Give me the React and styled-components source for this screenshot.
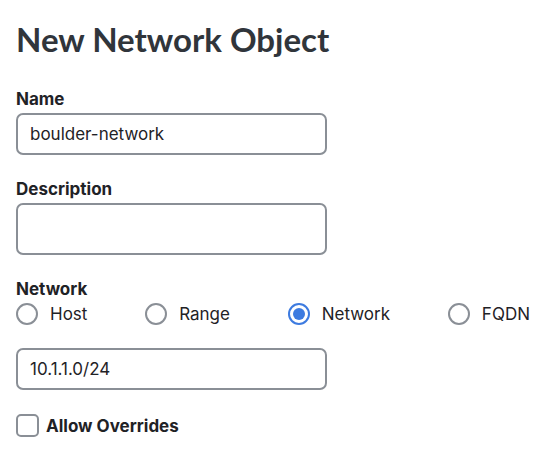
import React, { useState } from 'react';
import styled, { createGlobalStyle } from 'styled-components';

const GlobalStyle = createGlobalStyle`
  body {
    margin: 0;
    background: #ffffff;
    font-family: Inter, "Noto Sans", sans-serif;
    color: #1f2226;
  }
`;

const Page = styled.div`
  width: 548px;
  padding: 20px 18px 0 16px;
  box-sizing: border-box;
`;

const Title = styled.h1`
  margin: 0 0 31px;
  font-family: Lato, "Noto Sans", sans-serif;
  font-weight: 700;
  font-size: 33px;
  line-height: 38px;
  color: #30353b;
`;

const Field = styled.div`
  display: flex;
  flex-direction: column;
  margin-bottom: ${(p) => p.gap || 24}px;
`;

const Label = styled.label`
  font-size: 17px;
  font-weight: 700;
  line-height: 20px;
  margin-bottom: 4px;
  color: #1f2226;
`;

const TextInput = styled.input`
  width: 311px;
  height: ${(p) => (p.tall ? 52 : 42)}px;
  box-sizing: border-box;
  border: 2px solid #8a8f96;
  border-radius: 7px;
  padding: 0 12px;
  font-family: Inter, "Noto Sans", sans-serif;
  font-size: 17px;
  color: #1f2226;
  outline: none;
`;

const RadioRow = styled.div`
  display: flex;
  justify-content: space-between;
  align-items: center;
  margin: 4px 0 23px;
`;

const RadioItem = styled.label`
  display: flex;
  align-items: center;
  gap: 12px;
  font-size: 17px;
  cursor: pointer;
`;

const RadioCircle = styled.span`
  width: 22px;
  height: 22px;
  box-sizing: border-box;
  border-radius: 50%;
  border: 2px solid ${(p) => (p.checked ? '#3d7be0' : '#8a8f96')};
  display: flex;
  align-items: center;
  justify-content: center;
  &::after {
    content: '';
    width: 12px;
    height: 12px;
    border-radius: 50%;
    background: ${(p) => (p.checked ? '#3d7be0' : 'transparent')};
  }
`;

const CheckRow = styled.label`
  display: flex;
  align-items: center;
  gap: 7px;
  font-size: 17px;
  font-weight: 700;
`;

const CheckBox = styled.span`
  width: 23px;
  height: 23px;
  box-sizing: border-box;
  border: 2px solid #8a8f96;
  border-radius: 5px;
`;

const types = ['Host', 'Range', 'Network', 'FQDN'];

export default function App() {
  const [type, setType] = useState('Network');
  const [name, setName] = useState('boulder-network');
  const [net, setNet] = useState('10.1.1.0/24');

  return (
    <>
      <GlobalStyle />
      <Page>
        <Title>New Network Object</Title>
        <Field gap={24}>
          <Label>Name</Label>
          <TextInput value={name} onChange={(e) => setName(e.target.value)} />
        </Field>
        <Field gap={24}>
          <Label>Description</Label>
          <TextInput tall />
        </Field>
        <Label>Network</Label>
        <RadioRow>
          {types.map((t) => (
            <RadioItem key={t} onClick={() => setType(t)}>
              <RadioCircle checked={type === t} />
              {t}
            </RadioItem>
          ))}
        </RadioRow>
        <Field gap={24}>
          <TextInput value={net} onChange={(e) => setNet(e.target.value)} />
        </Field>
        <CheckRow>
          <CheckBox />
          Allow Overrides
        </CheckRow>
      </Page>
    </>
  );
}
